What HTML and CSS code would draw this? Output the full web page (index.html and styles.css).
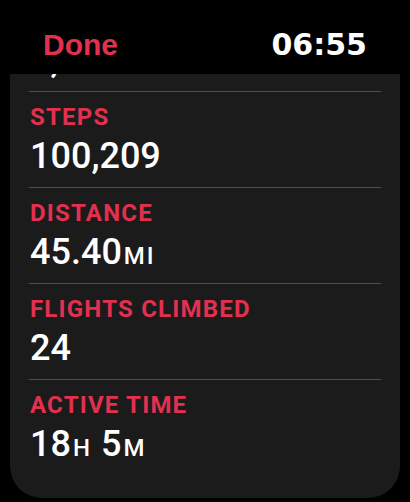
FILE: index.html
```html
<!DOCTYPE html>
<html lang="en">
<head>
    <meta charset="UTF-8">
    <meta name="viewport" content="width=device-width, initial-scale=1.0">
    <title>Activity Details</title>
    <link rel="stylesheet" href="styles.css">
</head>
<body>
    <header class="top-bar">
        <span class="done">Done</span>
        <span class="clock">06:55</span>
    </header>

    <section class="card">
        <div class="list">
            <!-- scrolled up, only the bottom of this value is visible -->
            <div class="row first">
                <div class="value">1,700</div>
            </div>
            <div class="row">
                <div class="label">Steps</div>
                <div class="value">100,209</div>
            </div>
            <div class="row">
                <div class="label">Distance</div>
                <div class="value">45.40<span class="unit">mi</span></div>
            </div>
            <div class="row">
                <div class="label">Flights Climbed</div>
                <div class="value">24</div>
            </div>
            <div class="row">
                <div class="label">Active Time</div>
                <div class="value">18<span class="unit">h</span> 5<span class="unit">m</span></div>
            </div>
        </div>
    </section>
</body>
</html>
```

FILE: styles.css
```css
body {
    margin: 0;
    background-color: #000;
    font-family: 'Roboto', 'Liberation Sans', sans-serif;
    color: #fff;
    height: 502px;
    overflow: hidden;
}
.top-bar {
    display: flex;
    justify-content: space-between;
    align-items: flex-start;
    height: 74px;
    box-sizing: border-box;
    padding: 28px 43px 0 43px;
    font-weight: bold;
    font-size: 30px;
    line-height: 34px;
}
.done {
    color: #e2304f;
    font-family: 'Liberation Sans', sans-serif;
}
.clock {
    color: #fff;
    font-family: 'DejaVu Sans', sans-serif;
}
.card {
    margin: 0 10px;
    height: 424px;
    background-color: #1b1b1b;
    border-radius: 0 0 32px 32px;
    overflow: hidden;
    padding: 0 19px;
}
.list {
    margin-top: -46px;
}
.row {
    border-top: 1px solid #4f4f4f;
    padding: 11px 0 11px 1px;
}
.row.first {
    border-top: none;
    padding-top: 12px;
}
.label {
    color: #e2304f;
    font-weight: 700;
    font-size: 24px;
    line-height: 28px;
    letter-spacing: 1.2px;
    text-transform: uppercase;
    margin-bottom: 5px;
}
.value {
    font-weight: 500;
    font-size: 36px;
    line-height: 40px;
}
.unit {
    text-transform: uppercase;
    font-size: 24px;
    line-height: 1;
    letter-spacing: 2px;
    margin-left: 2px;
}
```
